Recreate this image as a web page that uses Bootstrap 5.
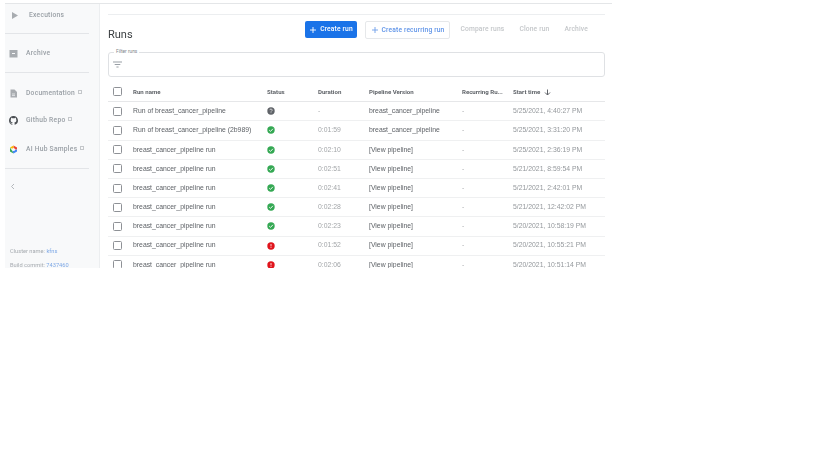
<!doctype html>
<html lang="en"><head><meta charset="utf-8"><title>Runs</title>
<link rel="stylesheet" href="https://cdn.jsdelivr.net/npm/bootstrap@5.3.0/dist/css/bootstrap.min.css">
<style>
html,body{background:#fff;height:100%}
body{font-family:"Liberation Sans",sans-serif;overflow:hidden}
.shell{width:607px;height:265px;margin:3px 0 0 5px;border-top:1px solid #e4e6e8;overflow:hidden;filter:blur(.6px)}
.sidebar{width:95px;flex:none;background:#f8f9fa;border-right:1px solid #eceef0;font-family:Roboto,sans-serif;color:#9aa0a6;height:265px;position:relative}
.side-item{font-size:6.7px;font-weight:500;letter-spacing:.25px;height:12px}
.side-ico{width:9px;height:9px;flex:none;margin-right:8px}
.ico-play{margin-left:1px;margin-right:10px}
.side-rule{height:1px;background:#e3e5e8;margin-right:10px}
.gap-a{margin-top:5px}.gap-b{margin-top:12px}.gap-c{margin-top:13px}.gap-d{margin-top:14px}.gap-e{margin-top:15px}.gap-f{margin-top:17px}
.ext{width:4px;height:4px;border:.7px solid #c4c7ca;display:inline-block;margin:0 0 3px 3px}
.side-chev{margin:14px 0 0 5px}
.side-foot{font-size:5.7px;color:#a6abb0;position:absolute;left:5px;white-space:nowrap;line-height:7px}
.foot-a{top:244px}.foot-b{top:258px}
.side-foot a{color:#7fa9e6;text-decoration:none}
.pane{width:512px;flex:none;padding:0 7px 0 8px}
.top-rule{height:1px;background:#eceef0;margin-top:10px}
.head-line{height:37px;padding-top:6px}
.runs-title{font-family:Roboto,sans-serif;font-size:11px;color:#3c4043;margin:7px 0 0;font-weight:400}
.act{font-family:Roboto,sans-serif;font-size:6.7px;font-weight:500;letter-spacing:.15px;white-space:nowrap;height:17px}
.act-primary{background:#1a73e8;color:#fff;border-radius:2px;width:52px;margin-right:8px}
.act-out{color:#5f94e8;border:1px solid #e6e8ea;border-radius:2px;height:18px;width:85px;margin-right:10px;background:#fff}
.act-off{color:#c4c7ca;margin-right:15px}
.act-last{margin-right:17px}
.plus-ico{display:block;flex:none}
.filter-box{height:25px;border:1px solid #dfe1e4;border-radius:3px;position:relative;padding:8px 0 0 4px}
.filter-lbl{position:absolute;left:5px;top:-4px;background:#fff;font-size:4.8px;color:#80868b;padding:0 2px;line-height:6px;font-family:Roboto,sans-serif}
.runs-grid{margin-top:5px}
.grid-row{height:19.2px;border-bottom:1px solid #eff0f1;font-size:6.85px;color:#6f7377}
.grid-row.grid-head{height:20.2px;font-family:Roboto,sans-serif;font-size:6.1px;font-weight:700;color:#5f6368;border-bottom-color:#e6e7e9}
.cbox{width:9px;height:9px;border:1.2px solid #8e9196;border-radius:1.5px;flex:none;margin:0 11px 0 5px;background:#fff}
.c-name{width:134px;flex:none;color:#5b5f64}
.c-status{width:51px;flex:none}
.c-dur{width:51px;flex:none;color:#a2a5a8}
.c-pipe{width:93px;flex:none;color:#5b5f64}
.c-rec{width:51px;flex:none;color:#a2a5a8}
.c-start{flex:none;color:#94989c;white-space:nowrap}
.grid-head .c-name,.grid-head .c-dur,.grid-head .c-pipe,.grid-head .c-rec,.grid-head .c-start{color:#5f6368}
.stat{width:8px;height:8px;display:block}
.sort-ico{margin-left:2px}
</style></head><body>
<div class="shell d-flex">
<aside class="sidebar">
 <div class="side-item d-flex align-items-center ps-1 gap-a"><svg class="side-ico ico-play" viewBox="0 0 9 9"><path d="M2 1l6 3.5L2 8z" fill="#a8acb0"/></svg>Executions</div>
 <div class="side-rule gap-b"></div>
 <div class="side-item d-flex align-items-center ps-1 gap-c"><svg class="side-ico" viewBox="0 0 9 9"><path d="M.5 1h8v7.5h-8z" fill="#a8acb0"/><path d="M3 4.5h3" stroke="#f8f9fa"/></svg>Archive</div>
 <div class="side-rule gap-c"></div>
 <div class="side-item d-flex align-items-center ps-1 gap-d"><svg class="side-ico" viewBox="0 0 9 9"><path d="M1.5.5h4l2.5 2.5v5.5h-6.5z" fill="#a8acb0"/><path d="M3 5h3M3 6.6h3" stroke="#f8f9fa" stroke-width=".7"/></svg>Documentation<span class="ext"></span></div>
 <div class="side-item d-flex align-items-center ps-1 gap-e"><svg class="side-ico" viewBox="0 0 16 16"><path fill="#4a4e52" d="M8 0C3.58 0 0 3.58 0 8c0 3.54 2.29 6.53 5.47 7.59.4.07.55-.17.55-.38 0-.19-.01-.82-.01-1.49-2.01.37-2.53-.49-2.69-.94-.09-.23-.48-.94-.82-1.13-.28-.15-.68-.52-.01-.53.63-.01 1.08.58 1.23.82.72 1.21 1.87.87 2.33.66.07-.52.28-.87.51-1.07-1.78-.2-3.64-.89-3.64-3.95 0-.87.31-1.59.82-2.15-.08-.2-.36-1.02.08-2.12 0 0 .67-.21 2.2.82.64-.18 1.32-.27 2-.27s1.36.09 2 .27c1.53-1.04 2.2-.82 2.2-.82.44 1.1.16 1.92.08 2.12.51.56.82 1.27.82 2.15 0 3.07-1.87 3.75-3.65 3.95.29.25.54.73.54 1.48 0 1.07-.01 1.93-.01 2.2 0 .21.15.46.55.38A8.01 8.01 0 0016 8c0-4.42-3.58-8-8-8z"/></svg>Github Repo<span class="ext"></span></div>
 <div class="side-item d-flex align-items-center ps-1 gap-f"><svg class="side-ico" viewBox="0 0 18 18"><path d="M9 1l7 4v4H9z" fill="#ea4335"/><path d="M16 9v4l-7 4-3-6z" fill="#4285f4"/><path d="M9 17l-7-4V5l4 6z" fill="#34a853"/><path d="M2 5l7-4v8z" fill="#fbbc04"/><circle cx="9" cy="9" r="3.2" fill="#f8f9fa"/></svg>AI Hub Samples<span class="ext"></span></div>
 <div class="side-rule gap-c"></div>
 <svg class="d-block side-chev" width="5" height="7" viewBox="0 0 5 7"><path d="M4 1L1.5 3.5 4 6" fill="none" stroke="#b4b8bc"/></svg>
 <div class="side-foot foot-a">Cluster name: <a href="#">kfns</a></div>
 <div class="side-foot foot-b">Build commit: <a href="#">7437460</a></div>
</aside>
<main class="pane">
 <div class="top-rule"></div>
 <div class="head-line d-flex align-items-start">
  <h1 class="runs-title flex-grow-1">Runs</h1>
  <span class="act act-primary d-flex align-items-center justify-content-center gap-1"><svg class="plus-ico" width="6" height="6" viewBox="0 0 6 6"><path d="M3 0v6M0 3h6" stroke="#fff" stroke-width=".9"/></svg>Create run</span>
  <span class="act act-out d-flex align-items-center justify-content-center gap-1"><svg class="plus-ico" width="6" height="6" viewBox="0 0 6 6"><path d="M3 0v6M0 3h6" stroke="#6d9eea" stroke-width=".9"/></svg>Create recurring run</span>
  <span class="act act-off d-flex align-items-center">Compare runs</span>
  <span class="act act-off d-flex align-items-center">Clone run</span>
  <span class="act act-off act-last d-flex align-items-center">Archive</span>
 </div>
 <div class="filter-box"><span class="filter-lbl">Filter runs</span><svg class="d-block" width="9" height="7" viewBox="0 0 9 7"><path d="M0 1h9M1.7 3.5h5.6M3.4 6h2.2" stroke="#9aa0a6" stroke-width="1.1"/></svg></div>
 <div class="runs-grid">
  <div class="grid-row grid-head d-flex align-items-center"><span class="cbox"></span><span class="c-name">Run name</span><span class="c-status">Status</span><span class="c-dur">Duration</span><span class="c-pipe">Pipeline Version</span><span class="c-rec">Recurring Ru...</span><span class="c-start">Start time <svg class="sort-ico" width="7" height="7" viewBox="0 0 7 7"><path d="M3.5 .5v5.5M1 3.5L3.5 6 6 3.5" fill="none" stroke="#5f6368"/></svg></span></div>
  <div class="grid-row d-flex align-items-center"><span class="cbox"></span><span class="c-name">Run of breast_cancer_pipeline</span><span class="c-status"><svg class="stat"><use href="#s-unk"/></svg></span><span class="c-dur">-</span><span class="c-pipe">breast_cancer_pipeline</span><span class="c-rec">-</span><span class="c-start">5/25/2021, 4:40:27 PM</span></div>
  <div class="grid-row d-flex align-items-center"><span class="cbox"></span><span class="c-name">Run of breast_cancer_pipeline (2b989)</span><span class="c-status"><svg class="stat"><use href="#s-ok"/></svg></span><span class="c-dur">0:01:59</span><span class="c-pipe">breast_cancer_pipeline</span><span class="c-rec">-</span><span class="c-start">5/25/2021, 3:31:20 PM</span></div>
  <div class="grid-row d-flex align-items-center"><span class="cbox"></span><span class="c-name">breast_cancer_pipeline run</span><span class="c-status"><svg class="stat"><use href="#s-ok"/></svg></span><span class="c-dur">0:02:10</span><span class="c-pipe">[View pipeline]</span><span class="c-rec">-</span><span class="c-start">5/25/2021, 2:36:19 PM</span></div>
  <div class="grid-row d-flex align-items-center"><span class="cbox"></span><span class="c-name">breast_cancer_pipeline run</span><span class="c-status"><svg class="stat"><use href="#s-ok"/></svg></span><span class="c-dur">0:02:51</span><span class="c-pipe">[View pipeline]</span><span class="c-rec">-</span><span class="c-start">5/21/2021, 8:59:54 PM</span></div>
  <div class="grid-row d-flex align-items-center"><span class="cbox"></span><span class="c-name">breast_cancer_pipeline run</span><span class="c-status"><svg class="stat"><use href="#s-ok"/></svg></span><span class="c-dur">0:02:41</span><span class="c-pipe">[View pipeline]</span><span class="c-rec">-</span><span class="c-start">5/21/2021, 2:42:01 PM</span></div>
  <div class="grid-row d-flex align-items-center"><span class="cbox"></span><span class="c-name">breast_cancer_pipeline run</span><span class="c-status"><svg class="stat"><use href="#s-ok"/></svg></span><span class="c-dur">0:02:28</span><span class="c-pipe">[View pipeline]</span><span class="c-rec">-</span><span class="c-start">5/21/2021, 12:42:02 PM</span></div>
  <div class="grid-row d-flex align-items-center"><span class="cbox"></span><span class="c-name">breast_cancer_pipeline run</span><span class="c-status"><svg class="stat"><use href="#s-ok"/></svg></span><span class="c-dur">0:02:23</span><span class="c-pipe">[View pipeline]</span><span class="c-rec">-</span><span class="c-start">5/20/2021, 10:58:19 PM</span></div>
  <div class="grid-row d-flex align-items-center"><span class="cbox"></span><span class="c-name">breast_cancer_pipeline run</span><span class="c-status"><svg class="stat"><use href="#s-err"/></svg></span><span class="c-dur">0:01:52</span><span class="c-pipe">[View pipeline]</span><span class="c-rec">-</span><span class="c-start">5/20/2021, 10:55:21 PM</span></div>
  <div class="grid-row d-flex align-items-center"><span class="cbox"></span><span class="c-name">breast_cancer_pipeline run</span><span class="c-status"><svg class="stat"><use href="#s-err"/></svg></span><span class="c-dur">0:02:06</span><span class="c-pipe">[View pipeline]</span><span class="c-rec">-</span><span class="c-start">5/20/2021, 10:51:14 PM</span></div>
 </div>
</main>
</div>
<svg width="0" height="0" class="position-absolute"><defs>
<g id="s-ok"><circle cx="4" cy="4" r="3.7" fill="#34a853"/><path d="M2.2 4.1l1.3 1.3 2.4-2.6" fill="none" stroke="#fff" stroke-width=".9"/></g>
<g id="s-err"><circle cx="4" cy="4" r="3.7" fill="#e0141c"/><path d="M4 2v2.4M4 5.2v.8" stroke="#fff" stroke-width=".8"/></g>
<g id="s-unk"><circle cx="4" cy="4" r="3.7" fill="#5f6368"/><path d="M2.9 3.1a1.1 1.1 0 1 1 1.6 1L4 4.7M4 5.4v.7" fill="none" stroke="#fff" stroke-width=".7"/></g>
</defs></svg>
<script src="https://cdn.jsdelivr.net/npm/bootstrap@5.3.0/dist/js/bootstrap.bundle.min.js"></script>
</body></html>
